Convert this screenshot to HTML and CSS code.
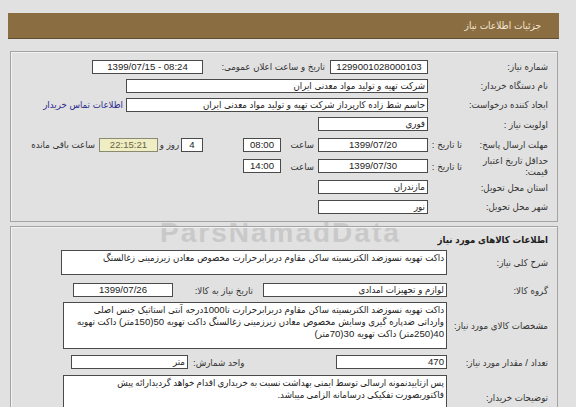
FILE: index.html
```html
<!DOCTYPE html>
<html lang="fa">
<head>
<meta charset="utf-8">
<title>جزئیات اطلاعات نیاز</title>
<link rel="stylesheet" href="styles.css">
</head>
<body>
<div class="page">
  <div class="wm wm-latin">ParsNamadData</div>

  <div class="header">جزئیات اطلاعات نیاز</div>

  <div class="fs fs1">
    <div class="row">
      <div class="lbl">شماره نیاز:</div>
      <div class="inp num w98">1299001028000103</div>
      <div class="mid w122">تاریخ و ساعت اعلان عمومی:</div>
      <div class="inp num w111">1399/07/15 - 08:24</div>
    </div>
    <div class="row">
      <div class="lbl">نام دستگاه خریدار:</div>
      <div class="inp w302">شرکت تهیه و تولید مواد معدنی ایران</div>
    </div>
    <div class="row">
      <div class="lbl">ایجاد کننده درخواست:</div>
      <div class="inp w302">جاسم شط زاده کارپرداز شرکت تهیه و تولید مواد معدنی ایران</div>
      <a class="link" href="#">اطلاعات تماس خریدار</a>
    </div>
    <div class="row r4">
      <div class="lbl">اولویت نیاز :</div>
      <div class="inp w110">فوری</div>
    </div>
    <div class="row r5">
      <div class="lbl split">
        <span class="main">مهلت ارسال پاسخ:</span>
        <span class="sub">تا تاریخ :</span>
      </div>
      <div class="inp num w110">1399/07/20</div>
      <div class="saat">ساعت</div>
      <div class="inp num w38">08:00</div>
      <div class="inp num w22 gap40">4</div>
      <div class="day">روز و</div>
      <div class="inp num timer">22:15:21</div>
      <div class="remain">ساعت باقی مانده</div>
    </div>
    <div class="row r6">
      <div class="lbl split">
        <span class="main two">حداقل تاریخ اعتبار<br>قیمت:</span>
        <span class="sub">تا تاریخ :</span>
      </div>
      <div class="inp num w110">1399/07/30</div>
      <div class="saat">ساعت</div>
      <div class="inp num w38">14:00</div>
    </div>
    <div class="row r7">
      <div class="lbl">استان محل تحویل:</div>
      <div class="inp w110">مازندران</div>
    </div>
    <div class="row">
      <div class="lbl">شهر محل تحویل:</div>
      <div class="inp w110">نور</div>
    </div>
  </div>

  <div class="fs fs2">
    <div class="title">اطلاعات کالاهای مورد نیاز</div>
    <div class="row2 first">
      <div class="lbl2">شرح کلی نیاز:</div>
      <div class="inp area h25 w386">داکت تهویه نسوزضد الکتریسیته ساکن مقاوم دربرابرحرارت مخصوص معادن زیرزمینی زغالسنگ</div>
    </div>
    <div class="row2 gr">
      <div class="lbl2">گروه کالا:</div>
      <div class="inp w184">لوازم و تجهیزات امدادی</div>
      <div class="mid2 w90">تاریخ نیاز به کالا:</div>
      <div class="inp num w100">1399/07/26</div>
    </div>
    <div class="row2 spec">
      <div class="lbl2">مشخصات کالای مورد نیاز:</div>
      <div class="inp area h47 w384">داکت تهویه نسوزضد الکتریسیته ساکن مقاوم دربرابرحرارت تا1000درجه آنتی استاتیک جنس اصلی<br>وارداتی ضدپاره گیری وسایش مخصوص معادن زیرزمینی زغالسنگ داکت تهویه 50(150متر) داکت تهویه<br>40(250متر) داکت تهویه 30(70متر)</div>
    </div>
    <div class="row2 qty">
      <div class="lbl2">تعداد / مقدار مورد نیاز:</div>
      <div class="inp w111">470</div>
      <div class="mid3">واحد شمارش:</div>
      <div class="inp w117">متر</div>
    </div>
    <div class="row2 desc">
      <div class="lbl2">توضیحات خریدار:</div>
      <div class="inp area tight h45 w384">پس ازتاییدنمونه ارسالی توسط ایمنی بهداشت نسبت به خریداری اقدام خواهد گردیدارائه پیش<br>فاکتوربصورت تفکیکی درسامانه الزامی میباشد.</div>
    </div>
  </div>
</div>
</body>
</html>
```

FILE: styles.css
```css
html {
  background: #e1e1e1;
}
body {
  margin: 8px;
  font-family: "Liberation Sans", "DejaVu Sans Condensed", "DejaVu Sans", sans-serif;
  font-size: 9.6px;
  color: #333;
  overflow: hidden;
}
.page {
  position: relative;
  width: 551px;
  direction: rtl;
  white-space: nowrap;
}
.header {
  margin-top: 5px;
  height: 26px;
  line-height: 26px;
  background: #8b6d42;
  border-bottom: 1px solid #5e4c33;
  box-sizing: border-box;
  color: #f3e8d3;
  padding-right: 18px;
  font-size: 10px;
}
.fs {
  margin: 12px 1px 0 2px;
  border: 1px solid #a3a3a3;
  box-shadow: inset 1px 1px 0 #f2f2f2;
  padding-right: 9px;
}
.fs1 {
  padding-top: 5px;
  padding-bottom: 5px;
}
.fs2 {
  margin-top: 4px;
  padding-top: 6px;
  height: 200px;
}
.row {
  display: flex;
  align-items: center;
  height: 19px;
}
.r4 { height: 20px; }
.r5 { height: 21px; }
.r6 { height: 22px; }
.r7 { height: 20px; }
.lbl {
  width: 120px;
  flex: none;
  text-align: right;
}
.lbl.split {
  display: flex;
  align-items: center;
}
.split .main {
  width: 86px;
  flex: none;
}
.split .main.two {
  line-height: 11px;
}
.split .sub {
  width: 34px;
  flex: none;
  text-align: right;
}
.inp {
  flex: none;
  box-sizing: border-box;
  height: 14px;
  line-height: 12px;
  background: #fff;
  border: 1px solid #4a4a4a;
  color: #222;
  padding: 0 2px;
  overflow: hidden;
  text-align: right;
}
.num {
  text-align: center;
  direction: ltr;
}
.w22 { width: 22px; }
.w38 { width: 38px; }
.w98 { width: 98px; }
.w100 { width: 100px; }
.w110 { width: 110px; }
.w111 { width: 111px; }
.w117 { width: 117px; }
.w184 { width: 184px; }
.w302 { width: 302px; }
.w384 { width: 384px; }
.w386 { width: 386px; }
.mid {
  flex: none;
  margin-right: 5px;
  text-align: right;
}
.w122 { width: 122px; }
.link {
  margin-right: 3px;
  color: #2a2a8c;
  text-decoration: none;
}
.saat {
  width: 37px;
  flex: none;
  box-sizing: border-box;
  padding-right: 4px;
}
.gap40 {
  margin-right: 40px;
}
.day {
  width: 23px;
  flex: none;
  text-align: center;
}
.timer {
  width: 59px;
  background: #eeedc4;
  color: #6b6540;
  border-color: #8a8a70;
}
.remain {
  margin-right: 4px;
}
.title {
  font-weight: bold;
  height: 14px;
  line-height: 14px;
  color: #222;
}
.row2 {
  display: flex;
  align-items: center;
}
.row2.first { margin-top: 3px; }
.row2.gr { margin-top: 8px; }
.row2.spec { margin-top: 5px; }
.row2.qty { margin-top: 6px; }
.row2.desc { margin-top: 6px; }
.lbl2 {
  width: 101px;
  flex: none;
  text-align: right;
}
.area {
  padding-top: 1px;
  line-height: 12px;
}
.h25 { height: 25px; }
.h47 { height: 47px; }
.h45 { height: 45px; }
.tight {
  word-spacing: -0.5px;
}
.mid2 {
  flex: none;
  box-sizing: border-box;
  padding-right: 10px;
  text-align: right;
}
.w90 { width: 90px; }
.mid3 {
  flex: none;
  width: 148px;
  box-sizing: border-box;
  padding-left: 5px;
  text-align: left;
}
.wm {
  position: absolute;
  z-index: -1;
  pointer-events: none;
  color: #c9c9c9;
}
.wm-latin {
  left: 152px;
  top: 204px;
  direction: ltr;
  font-family: "Liberation Sans", sans-serif;
  font-weight: bold;
  font-size: 28px;
  letter-spacing: 2px;
}
```
